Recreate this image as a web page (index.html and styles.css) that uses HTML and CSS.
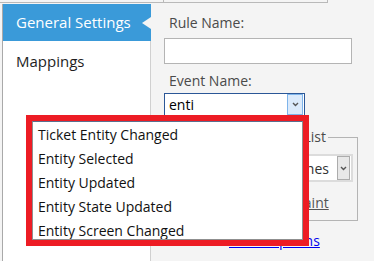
FILE: index.html
```html
<!DOCTYPE html>
<html>
<head>
  <title>Rule Editor</title>
  <meta charset="UTF-8">
  <link rel="stylesheet" href="styles.css">
</head>
<body>
  <div class="tabs">
    <div class="tab tab-first"></div>
    <div class="tab tab-second"></div>
  </div>
  <div class="layout">
    <ul class="nav">
      <li class="nav-item active">General Settings</li>
      <li class="nav-item">Mappings</li>
    </ul>
    <div class="panel">
      <label class="field-label" for="ruleName">Rule Name:</label>
      <input type="text" id="ruleName" class="text-input">
      <label class="field-label label-gap">Event Name:</label>
      <div class="combo">
        <span class="combo-text">enti</span>
        <span class="combo-btn">
          <svg width="7" height="5" viewBox="0 0 7 5"><path d="M1 1 L3.5 3.5 L6 1" fill="none" stroke="#555" stroke-width="1.4"/></svg>
        </span>
      </div>
      <fieldset class="group">
        <legend>Entity List</legend>
        <div class="select">
          <span class="select-text">Name Matches</span>
          <span class="select-btn">
            <svg width="7" height="5" viewBox="0 0 7 5"><path d="M1 1 L3.5 3.5 L6 1" fill="none" stroke="#555" stroke-width="1.4"/></svg>
          </span>
        </div>
        <a class="link-muted" href="#">Add Constraint</a>
      </fieldset>
      <a class="link" href="#">Show Options</a>
    </div>
  </div>

  <div class="highlight">
    <ul class="dropdown">
      <li>Ticket Entity Changed</li>
      <li>Entity Selected</li>
      <li>Entity Updated</li>
      <li>Entity State Updated</li>
      <li>Entity Screen Changed</li>
    </ul>
  </div>
</body>
</html>
```

FILE: styles.css
```css
body {
  margin: 0;
  background-color: #f4f4f4;
  font-family: "Open Sans", sans-serif;
  font-size: 14px;
  color: #222;
  height: 261px;
  overflow: hidden;
}
.tabs {
  display: flex;
  height: 3px;
}
.tab {
  border-bottom: 1px solid #b9b9b9;
  border-right: 1px solid #b9b9b9;
}
.tab-first {
  width: 163px;
}
.tab-second {
  width: 163px;
}
.layout {
  display: flex;
  margin-top: 1px;
  height: 257px;
}
.nav {
  list-style: none;
  margin: 0 0 0 2px;
  padding: 0;
  width: 147px;
  background-color: #fff;
  border-left: 1px solid #a9a9a9;
  border-right: 1px solid #d0d0d0;
}
.nav-item {
  height: 40px;
  line-height: 40px;
  padding-left: 13px;
  font-size: 15px;
  color: #1e1e1e;
}
.nav-item.active {
  position: relative;
  height: 37px;
  line-height: 37px;
  background-color: #3a9ad9;
  color: #fff;
  margin-right: -1px;
}
.nav-item.active::after {
  content: "";
  position: absolute;
  right: 0;
  top: 13px;
  border-top: 6px solid transparent;
  border-bottom: 6px solid transparent;
  border-right: 9px solid #f4f4f4;
}
.panel {
  flex: 1;
  padding: 9px 0 0 13px;
  display: flex;
  flex-direction: column;
  align-items: flex-start;
}
.field-label {
  line-height: 20px;
  color: #4a4a4a;
  padding-left: 5px;
}
.label-gap {
  margin-top: 7px;
}
.text-input {
  margin: 5px 0 0 0;
  width: 188px;
  height: 26px;
  box-sizing: border-box;
  border: 1px solid #b4b4b4;
  background-color: #fff;
  padding: 0 4px;
}
.combo {
  margin-top: 2px;
  width: 141px;
  height: 23px;
  box-sizing: border-box;
  border: 1px solid #2b5797;
  background-color: #fff;
  display: flex;
  align-items: center;
  justify-content: space-between;
}
.combo-text {
  padding-left: 4px;
  color: #000;
}
.combo-btn {
  width: 14px;
  height: 19px;
  margin-right: 1px;
  background-color: #dbeafb;
  border: 1px solid #7eb4ea;
  display: flex;
  align-items: center;
  justify-content: center;
}
.group {
  margin: 11px 0 0 0;
  width: 194px;
  height: 94px;
  box-sizing: border-box;
  border: 1px solid #b4b4b4;
  padding: 7px 3px 0 40px;
  font-family: inherit;
}
.group legend {
  padding: 0 2px;
  margin-left: 56px;
  color: #4a4a4a;
  line-height: 20px;
}
.select {
  width: 148px;
  height: 28px;
  box-sizing: border-box;
  border: 2px solid #dcdcdc;
  background-color: #fff;
  display: flex;
  align-items: center;
  justify-content: space-between;
}
.select-text {
  padding-left: 24px;
  color: #333;
}
.select-btn {
  width: 11px;
  height: 22px;
  margin-right: 1px;
  background-color: #e8e8e8;
  border: 1px solid #acacac;
  display: flex;
  align-items: center;
  justify-content: center;
}
.link-muted {
  display: block;
  width: fit-content;
  line-height: 20px;
  margin-top: 11px;
  margin-left: 26px;
  color: #555;
}
.link {
  line-height: 20px;
  margin-top: 10px;
  margin-left: 65px;
  color: #0000ee;
}
.highlight {
  position: absolute;
  left: 26px;
  top: 115px;
  width: 271px;
  height: 119px;
  border: 6px solid #ed1c24;
}
.dropdown {
  list-style: none;
  margin: 0;
  padding: 1px 0 0 5px;
  height: 119px;
  box-sizing: border-box;
  background-color: #fff;
  border: 1px solid #8f8f8f;
  border-top-color: #5a6f8e;
  overflow: hidden;
}
.dropdown li {
  line-height: 24px;
  color: #111;
}
```
